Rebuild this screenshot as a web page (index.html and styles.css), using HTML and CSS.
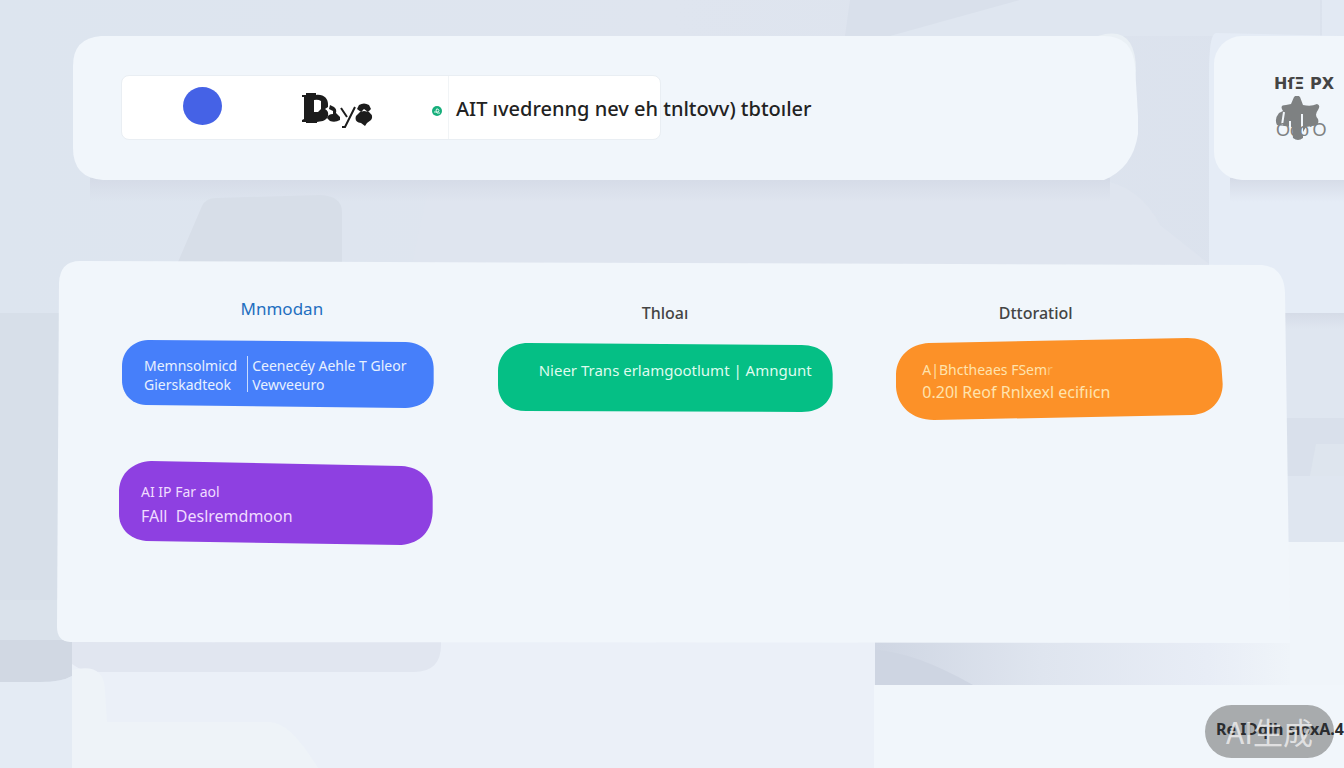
FILE: index.html
```html
<!DOCTYPE html>
<html lang="en">
<head>
    <meta charset="UTF-8">
    <meta name="viewport" content="width=device-width, initial-scale=1.0">
    <title>Bays</title>
    <link rel="stylesheet" href="styles.css">
</head>
<body>
    <!-- Backdrop -->
    <svg class="backdrop" viewBox="0 0 1344 768" preserveAspectRatio="none" aria-hidden="true">
        <defs>
            <linearGradient id="base" x1="0" y1="0" x2="1" y2="0">
                <stop offset="0" stop-color="#dde5ef"/>
                <stop offset="0.5" stop-color="#dfe5ef"/>
                <stop offset="1" stop-color="#dbe2ed"/>
            </linearGradient>
            <linearGradient id="strip" x1="0" y1="0" x2="1" y2="0">
                <stop offset="0" stop-color="#cfd6e3"/>
                <stop offset="0.4" stop-color="#dfe5ef"/>
                <stop offset="0.8" stop-color="#e8edf6"/>
                <stop offset="1" stop-color="#eff4f9"/>
            </linearGradient>
            <linearGradient id="shade" x1="0" y1="0" x2="0" y2="1">
                <stop offset="0" stop-color="#d5dbe7"/>
                <stop offset="1" stop-color="#d5dbe7" stop-opacity="0"/>
            </linearGradient>
        </defs>
        <rect width="1344" height="768" fill="url(#base)"/>
        <path d="M850 0H1020L980 36H845Z" fill="#d9e0eb"/>
        <path d="M1020 0H1320V36H890Z" fill="#dfe6f0"/>
        <rect x="1322" width="22" height="36" fill="#e2e9f3"/>
        <path d="M430 180H1100Q1140 186 1160 225L1209 264H412Z" fill="#dfe5ef"/>
        <rect x="90" y="178" width="1020" height="24" fill="url(#shade)"/>
        <path d="M178 262L202 206Q206 198 216 198L320 195Q342 196 342 212V262Z" fill="#d7dee8"/>
        <path d="M1209 264V75Q1209 33 1216 33L1344 36V313H1209Z" fill="#e5ecf6"/>
        <rect x="1230" y="178" width="114" height="24" fill="url(#shade)"/>
        <rect x="1270" y="313" width="74" height="105" fill="#dfe6f0"/>
        <rect x="1270" y="313" width="74" height="16" fill="url(#shade)"/>
        <rect x="1270" y="418" width="74" height="58" fill="#d9e0eb"/>
        <path d="M1310 476L1316 444H1344V476Z" fill="#dee5ee"/>
        <rect x="1270" y="476" width="74" height="66" fill="#dfe6f0"/>
        <rect x="1270" y="542" width="74" height="226" fill="#f0f5fa"/>
        <rect y="313" width="72" height="287" fill="#d7dfe9"/>
        <rect y="600" width="72" height="42" fill="#dae2eb"/>
        <path d="M0 640H72V676Q62 682 40 682H0Z" fill="#d1d8e3"/>
        <path d="M0 682H40Q62 682 72 676V768H0Z" fill="#e4ebf4"/>
        <rect x="72" y="640" width="803" height="128" fill="#ebf0f8"/>
        <path d="M72 640H441V645Q441 672 414 672H100Q82 672 72 664Z" fill="#e1e6f0"/>
        <path d="M72 670Q104 662 105 690L107 722H270Q290 722 318 768H72Z" fill="#eef3f8"/>
        <rect x="875" y="640" width="415" height="46" fill="url(#strip)"/>
        <path d="M875 650Q915 652 973 685H875Z" fill="#ced5e2"/>
    </svg>

    <header class="top-row">
        <div class="card header-card">
            <svg class="shape" viewBox="0 0 1065 144" preserveAspectRatio="none" aria-hidden="true">
                <path d="M1025 0Q1063 -12 1063 35L1060 60L1010 30Z" fill="#eaf0f5"/>
                <path d="M28 0H1031Q1059 0 1062 30L1065 80V98Q1060 132 1031 144H30Q0 142 0 112V30Q0 2 28 0Z" fill="#f1f6fb"/>
            </svg>
            <div class="brand-box">
                <span class="brand-dot"></span>
                <svg class="brand-logo" viewBox="0 0 71 38" role="img" aria-label="Bays">
                    <path fill="#1c1c1c" fill-rule="evenodd" d="M0 3H4V1H14V3C22 2 26 7 26 12V15L23 17Q27 19 26 24C24 30 18 29 15 30V31H4V30H0V28L2 27V5H0ZM12 8V20H16L19 17V9Q16 7 12 8Z"/>
                    <path fill="#1c1c1c" d="M28 13L32 15Q35 17 34 21L38 25V28Q33 31 28 29L25 26Q26 22 31 22V19L27 17Z"/>
                    <path fill="none" stroke="#1c1c1c" stroke-width="2" d="M39 16L45 25M53 15L43 35H40"/>
                    <path fill="#1c1c1c" d="M57 13Q62 10 67 13L69 17L66 20L62 17L59 20L55 17ZM58 20L62 19L67 20Q72 24 69 28L65 31L63 34L59 31Q52 30 54 24Z"/>
                </svg>
                <svg class="badge" viewBox="0 0 12 12" aria-hidden="true">
                    <circle cx="6" cy="6" r="5" fill="#16ae7b"/>
                    <path d="M3 7H7Q9 6 7 4Q5 3 5 6Q5 9 9 8" fill="none" stroke="#d9f5ea"/>
                </svg>
                <h1>AIT ıvedrenng nev eh tnltovv) tbtoıler</h1>
            </div>
        </div>
        <aside class="card side-card">
            <p class="side-title">HſΞ PX</p>
            <div class="side-logo">
                <svg viewBox="0 0 46 44" aria-hidden="true">
                    <path fill="#7e8182" d="M20 1Q23 -2 26 1L29 9Q37 11 43 8Q47 9 44 14Q40 19 44 23Q46 30 38 30L32 31L29 36V42Q24 46 19 42L18 31L3 29Q0 23 5 17L9 15Q5 9 12 9L17 8Z"/>
                    <path fill="none" stroke="#f1f6fb" stroke-width="2" d="M10 16L8 29M28 18V39M16 25V31"/>
                </svg>
                <span class="side-caption">Oco'O</span>
            </div>
        </aside>
    </header>

    <main class="board">
        <svg class="shape" viewBox="0 0 1230 381" preserveAspectRatio="none" aria-hidden="true">
            <path d="M22 0L1204 4Q1226 6 1227 32L1232 382L12 381Q-1 380 -1 366L1 22Q2 0 22 0Z" fill="#f1f6fb"/>
        </svg>
        <section class="column">
            <h2 class="active">Mnmodan</h2>
            <div class="task task-blue">
                <svg class="shape" viewBox="0 0 312 68" preserveAspectRatio="none" aria-hidden="true">
                    <path d="M26 0L284 2C302 3 312 14 312 29V43C311 58 302 67 284 68L24 65C8 64 0 53 0 40V26C0 12 10 1 26 0Z" fill="#467ffa"/>
                </svg>
                <div class="task-part">
                    <p>Memnsolmicd</p>
                    <p>Gierskadteok</p>
                </div>
                <div class="task-part">
                    <p>Ceenecéy Aehle T Gleor</p>
                    <p>Vewveeuro</p>
                </div>
            </div>
            <div class="task task-purple">
                <svg class="shape" viewBox="0 0 312 84" preserveAspectRatio="none" aria-hidden="true">
                    <path d="M32 0L282 5C301 6 312 18 313 36V51C312 70 301 82 282 84L27 80C9 78 0 66 0 53V29C1 12 14 1 32 0Z" fill="#8e40e1"/>
                </svg>
                <p>AI IP Far aol</p>
                <p class="large">FAll&nbsp; Deslremdmoon</p>
            </div>
        </section>
        <section class="column">
            <h2>Thloaı</h2>
            <div class="task task-green">
                <svg class="shape" viewBox="0 0 335 69" preserveAspectRatio="none" aria-hidden="true">
                    <path d="M30 0L304 2C323 2 335 13 335 31V42C335 58 323 69 304 69L28 68C10 68 0 57 0 42V28C0 12 12 0 30 0Z" fill="#05bf85"/>
                </svg>
                <p>Nieer Trans erlamgootlumt | Amngunt</p>
            </div>
        </section>
        <section class="column">
            <h2>Dttoratiol</h2>
            <div class="task task-orange">
                <svg class="shape" viewBox="0 0 327 82" preserveAspectRatio="none" aria-hidden="true">
                    <path d="M33 5L292 0C312 0 326 13 326 32L327 46C327 63 315 76 296 77L38 82C16 82 1 68 0 49V36C1 18 14 6 33 5Z" fill="#fc9128"/>
                </svg>
                <p>A|Bhctheaes FSem<span class="fade">r</span></p>
                <p class="large">0.20l Reof Rnlxexl ecifıicn</p>
            </div>
        </section>
    </main>

    <footer class="footer">
        <p>Re IDqlh sıoxA.4</p>
    </footer>
    <div class="watermark"><span>AI生成</span></div>
</body>
</html>
```
FILE: styles.css
```css
* {
    margin: 0;
    padding: 0;
    box-sizing: border-box;
}

body {
    position: relative;
    min-height: 100vh;
    display: flex;
    flex-direction: column;
    overflow: hidden;
    background: #dde4ee;
    font-family: "Noto Sans", "Noto Sans CJK SC", sans-serif;
    color: #222;
}

.backdrop {
    position: absolute;
    inset: 0;
    width: 100%;
    height: 100%;
    z-index: -2;
}

.shape {
    position: absolute;
    inset: 0;
    width: 100%;
    height: 100%;
    z-index: -1;
    overflow: visible;
}

/* Header */
.top-row {
    display: grid;
    grid-template-columns: minmax(0, 1fr) 130px;
    gap: 76px;
    padding: 36px 0 0 73px;
}

.card {
    position: relative;
    min-height: 144px;
}

.header-card {
    padding: 39px 52px 40px 48px;
}

.brand-box {
    display: flex;
    align-items: center;
    width: 56%;
    height: 65px;
    padding-left: 61px;
    background: #fff;
    border: 1px solid #e9eef3;
    border-radius: 8px;
    white-space: nowrap;
}

.brand-dot {
    flex: none;
    width: 39px;
    height: 38px;
    margin-right: 80px;
    margin-bottom: 3px;
    border-radius: 50%;
    background: #4562e6;
}

.brand-logo {
    flex: none;
    width: 71px;
    height: 38px;
    margin-top: 6px;
    margin-right: 58px;
}

.badge {
    flex: none;
    width: 12px;
    height: 12px;
    margin-top: 6px;
    margin-right: 5px;
}

h1 {
    display: flex;
    align-items: center;
    height: 100%;
    padding-top: 2px;
    padding-left: 7px;
    border-left: 1px solid #f1f4f6;
    font-size: 20px;
    font-weight: 500;
    line-height: 28px;
}

.side-card {
    padding: 36px 0 0 60px;
    background: #f1f6fb;
    border-radius: 28px 0 0 28px;
    white-space: nowrap;
    overflow: hidden;
}

.side-title {
    font-family: "DejaVu Sans", sans-serif;
    font-size: 16px;
    font-weight: 700;
    line-height: 24px;
    color: #444;
}

.side-logo {
    position: relative;
    width: 60px;
}

.side-logo svg {
    display: block;
    width: 46px;
    height: 44px;
}

.side-caption {
    position: absolute;
    left: 2px;
    bottom: 0;
    font-family: "Liberation Sans", sans-serif;
    font-size: 18px;
    line-height: 20px;
    color: #7e8182;
}

/* Board */
.board {
    position: relative;
    display: grid;
    grid-template-columns: minmax(0, 312fr) minmax(0, 335fr) minmax(0, 327fr);
    gap: 64px;
    min-height: 381px;
    margin: 81px 56px 0 58px;
    padding: 36px 65px 0 64px;
}

.column {
    display: flex;
    flex-direction: column;
}

h2 {
    margin-bottom: 18px;
    padding-top: 4px;
    font-size: 16px;
    font-weight: 500;
    line-height: 24px;
    text-align: center;
    color: #444;
}

h2.active {
    margin-bottom: 19px;
    padding-top: 0;
    padding-left: 8px;
    font-size: 17px;
    font-weight: 400;
    color: #1f6fc0;
}

.column:last-child h2 {
    margin-bottom: 14px;
    padding-right: 48px;
}

.task {
    position: relative;
    color: #e8f1ff;
    font-size: 14px;
    line-height: 19px;
    white-space: nowrap;
}

.large {
    font-size: 16px;
}

.task-blue {
    display: flex;
    min-height: 68px;
    padding: 16px 22px 14px;
    margin-bottom: 53px;
}

.task-part + .task-part {
    height: 36px;
    margin-left: 10px;
    padding-left: 4px;
    border-left: 1px solid #c9dcff;
}

.task-purple {
    min-height: 84px;
    margin-left: -3px;
    margin-right: 2px;
    padding: 19px 22px 17px;
    line-height: 24px;
    color: #f0dcff;
}

.task-green {
    min-height: 69px;
    padding: 18px 26px 18px 41px;
    font-size: 15px;
    color: #dffbee;
}

.task-orange {
    min-height: 82px;
    margin-top: -1px;
    padding: 21px 26px 17px;
    line-height: 22px;
    color: #ffe3ad;
}

.fade {
    opacity: 0.5;
}

/* Footer */
.footer {
    flex: 1;
    min-height: 83px;
    margin-top: 43px;
    margin-left: 65%;
    padding-top: 34px;
    background: #f1f6fb;
    font-size: 16px;
    font-weight: 700;
    line-height: 20px;
    color: #2b2d30;
    text-align: right;
    white-space: nowrap;
}

.footer p {
    position: relative;
    z-index: 1;
}

.watermark {
    position: absolute;
    right: 10px;
    bottom: 10px;
    width: 129px;
    height: 53px;
    border-radius: 27px;
    background: #a8abad;
    color: rgba(240, 240, 240, 0.8);
    font-family: "Noto Sans CJK SC", sans-serif;
    font-size: 30px;
    line-height: 52px;
    text-align: center;
}

.watermark span {
    position: relative;
    z-index: 2;
}
```
